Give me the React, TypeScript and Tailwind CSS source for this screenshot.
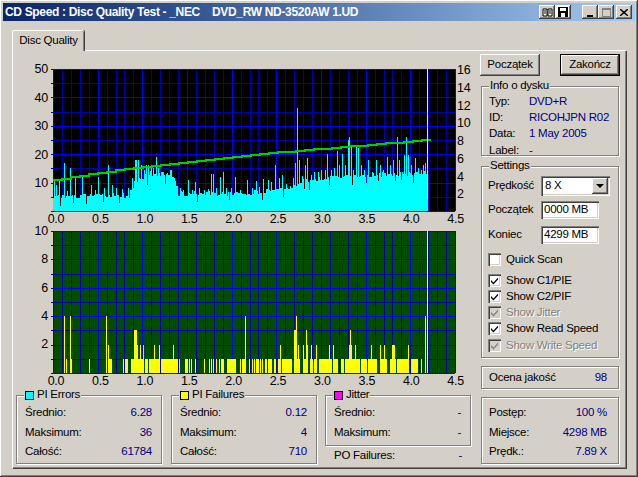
import { ReactNode } from 'react'

const raised = 'shadow-[inset_-1px_-1px_0_#404040,inset_1px_1px_0_#fff,inset_-2px_-2px_0_#808080]'
const sunken = 'shadow-[inset_1px_1px_0_#808080,inset_2px_2px_0_#404040,inset_-1px_-1px_0_#fff,inset_-2px_-2px_0_#d4d0c8]'
const etched = 'border border-[#808080] shadow-[inset_1px_1px_0_#fff,1px_1px_0_#fff]'

const X0 = 53
const X1 = 455
const PX_PER_UNIT = (X1 - X0) / 4.5
const FONT = 'Liberation Sans'

// page x -> top y of the cyan columns
const floorPts: [number, number][] = [[53, 199], [128, 198], [134, 184], [150, 176], [172, 178], [178, 196], [250, 196], [290, 190], [300, 184], [345, 178], [428, 176]]
const greenPts: [number, number][] = [[53, 180], [130, 168], [260, 154], [425, 140]]

const peaks: [number, number][] = [
  [54, 180], [56, 185], [59, 180], [64, 163], [67, 191], [70, 168], [75, 177], [82, 177], [91, 185], [95, 190], [98, 177], [104, 188], [108, 165], [112, 185],
  [116, 188], [122, 189], [128, 188], [132, 178], [135, 160], [136, 160], [138, 160], [141, 165], [144, 170], [146, 165], [148, 165], [151, 165], [153, 168], [156, 157], [158, 168], [161, 172],
  [164, 175], [167, 173], [170, 170], [171, 170], [174, 178], [176, 186], [180, 188], [183, 190], [188, 180], [192, 190], [195, 182], [199, 188], [204, 190], [208, 189], [211, 174], [213, 174],
  [216, 188], [220, 177], [223, 172], [226, 188], [231, 188], [235, 177], [240, 190], [247, 180], [252, 188], [256, 181], [259, 187], [263, 179], [268, 180], [271, 182], [275, 165], [279, 178], [282, 175],
  [286, 184], [290, 186], [293, 178], [295, 163], [297, 108], [299, 160], [302, 176], [305, 165], [307, 158], [311, 175], [314, 172], [318, 172], [321, 170], [325, 170], [327, 154], [331, 170], [334, 168],
  [337, 151], [339, 165], [342, 154], [345, 165], [348, 140], [349, 137], [351, 145], [353, 170], [356, 147], [358, 148], [361, 165], [364, 170], [368, 160], [372, 172], [376, 160], [380, 165], [383, 170], [387, 157],
  [390, 165], [393, 160], [397, 137], [399, 160], [402, 172], [404, 155], [406, 137], [408, 155], [411, 165], [415, 158], [418, 168], [421, 170], [423, 165], [425, 163],
]

const cuts = [60, 73, 86, 103, 119, 147, 165, 197, 229, 262, 283, 304, 309, 329, 352, 366, 378, 395, 401, 413]

const lerp = (pts: [number, number][], x: number) => {
  for (let i = 1; i < pts.length; i++) {
    if (x <= pts[i][0]) {
      const [a, b] = [pts[i - 1], pts[i]]
      return a[1] + ((b[1] - a[1]) * (x - a[0])) / (b[0] - a[0])
    }
  }
  return pts[pts.length - 1][1]
}

const cyanColumns = () => {
  const cols: { x: number; top: number }[] = []
  for (let x = X0; x < 428; x++) {
    const even = x - (x % 2)
    let top = lerp(floorPts, even) - (Math.abs(Math.sin(even * 12.9898) * 43758.5453) % 1) * 5
    const peak = peaks.find((p) => Math.abs(p[0] - x) < 1)
    if (peak) top = Math.min(top, peak[1])
    if (cuts.includes(x)) top = top + 8
    cols.push({ x, top: Math.round(top) })
  }
  return cols
}

const greenLine = () => {
  const out: string[] = []
  for (let x = X0; x < 425; x += 9) {
    const y = Math.round(lerp(greenPts, x))
    out.push(x + ',' + y, x + 9 + ',' + y)
  }
  return out.join(' ')
}

// [from x, to x] in page px
const yellowOne: [number, number][] = [
  [66, 67], [71, 72], [89, 90], [109, 112], [123, 124], [125, 128], [131, 144], [145, 148], [149, 150], [150, 160], [161, 172], [172, 178], [179, 180], [185, 188], [189, 190], [191, 192], [195, 196],
  [204, 205], [209, 210], [211, 212], [213, 214], [216, 217], [219, 220], [221, 224], [227, 230], [230, 233], [233, 236], [240, 241], [242, 245], [249, 250], [252, 253], [254, 255], [256, 259], [260, 261], [262, 263],
  [265, 267], [268, 272], [274, 276], [278, 280], [282, 292], [294, 300], [303, 308], [310, 313], [314, 317], [319, 327], [327, 332], [333, 338], [341, 344], [345, 360], [361, 367], [368, 377], [380, 387], [390, 396], [397, 409], [411, 418], [421, 422], [425, 426],
]
const yellowTall: [number, number, number][] = [
  [64, 65, 4], [70, 71, 4], [106, 107, 4], [245, 246, 4], [108, 109, 2], [137, 138, 2], [140, 141, 2], [143, 144, 2], [154, 155, 2], [159, 160, 2], [173, 174, 2], [134, 137, 3],
  [280, 281, 2], [294, 297, 3], [296, 297, 4], [298, 299, 2], [303, 304, 2], [306, 307, 3], [307, 308, 2], [311, 312, 2], [316, 317, 2], [329, 330, 2], [333, 334, 2], [349, 352, 2], [350, 351, 3], [355, 356, 2], [371, 372, 2], [380, 381, 2], [384, 385, 2], [392, 395, 2], [408, 409, 2], [425, 426, 4],
]

function Chart({ top, svgTop, svgH, bg, labels, cyan }: { top: number; svgTop: number; svgH: number; bg: string; labels: [string, number][]; cyan?: boolean }) {
  const plotH = 142
  const bottom = top + plotH
  const hLines = Array.from({ length: 11 }, (_, i) => i)
  const vLines = Array.from({ length: 46 }, (_, i) => i)
  return (
    <svg width="462" height={svgH} viewBox={'13 ' + svgTop + ' 462 ' + svgH} className="block overflow-visible" style={{ fontFamily: FONT }}>
      <rect x={X0} y={top} width={X1 - X0} height={plotH} fill={bg} />
      <g shapeRendering="crispEdges">
        {vLines.map((i) => {
          const x = Math.round(X0 + i * (PX_PER_UNIT / 10))
          return <line key={i} x1={x + 0.5} x2={x + 0.5} y1={top} y2={bottom} stroke={i % 5 === 0 ? '#0000ff' : '#0000b0'} />
        })}
        {hLines.map((i) => {
          const y = Math.round(top + i * 14.2)
          return <line key={i} x1={X0 - 2} x2={X1} y1={y + 0.5} y2={y + 0.5} stroke={i % 2 === 0 ? '#0000ff' : '#0000b0'} />
        })}
        {cyan && cyanColumns().map((c) => <rect key={c.x} x={c.x} y={c.top} width="1" height={bottom - c.top} fill="#00ffff" />)}
        {!cyan && yellowOne.map(([a, b]) => <rect key={a + '-' + b} x={a} y={bottom - 14} width={b - a} height="14" fill="#ffff00" />)}
        {!cyan && yellowTall.map(([a, b, v]) => <rect key={a + '-' + v} x={a} y={Math.round(bottom - v * 14.2)} width={b - a} height={Math.round(v * 14.2)} fill="#ffff00" />)}
      </g>
      {cyan && <polyline points={greenLine()} fill="none" stroke="#00d000" strokeWidth="1.5" shapeRendering="crispEdges" />}
      <rect x="427" y={top} width="1" height={cyan ? 130 : plotH} fill="#e4e4dc" />
      {labels.map(([t, y]) => (
        <text key={t} x="48" y={y + 4} textAnchor="end" fontSize="12.5" fill="#000">{t}</text>
      ))}
      {cyan && [16, 14, 12, 10, 8, 6, 4, 2].map((v) => (
        <text key={v} x="457" y={bottom - v * 8.875 + 5} fontSize="12.5" fill="#000">{v}</text>
      ))}
      {['0.0', '0.5', '1.0', '1.5', '2.0', '2.5', '3.0', '3.5', '4.0', '4.5'].map((t, i) => (
        <text key={t} x={56 + i * 44.4} y={bottom + 12} textAnchor="middle" fontSize="12.5" fill="#000">{t}</text>
      ))}
    </svg>
  )
}

function Group({ title, swatch, className, children }: { title: string; swatch?: string; className: string; children: ReactNode }) {
  return (
    <div className={'relative ' + etched + ' ' + className}>
      <div className="absolute -top-[8px] left-[7px] flex h-[14px] items-center gap-[3px] bg-[#d4d0c8] px-[1px]">
        {swatch && <span className={'h-[9px] w-[9px] border border-black ' + swatch} />}
        <span>{title}</span>
      </div>
      {children}
    </div>
  )
}

function Row({ label, value, className }: { label: string; value: string; className: string }) {
  return (
    <div className={'flex items-center justify-between ' + className}>
      <span>{label}</span>
      <span className="text-[#000080]">{value}</span>
    </div>
  )
}

function Info({ label, value }: { label: string; value: string }) {
  return (
    <div className="flex h-[16.4px] items-center">
      <span className="w-[40px]">{label}</span>
      <span className="text-[#000080]">{value}</span>
    </div>
  )
}

function Check({ label, checked, disabled, className }: { label: string; checked?: boolean; disabled?: boolean; className?: string }) {
  return (
    <div className={'flex items-center gap-[5px] ' + (className ?? 'h-[16.25px]')}>
      <span className={'flex h-[13px] w-[13px] items-center justify-center ' + sunken + ' ' + (disabled ? 'bg-[#d4d0c8]' : 'bg-white')}>
        {checked && (
          <svg width="9" height="9" viewBox="0 0 9 9">
            <path d="M1 4l2.5 2.5L8 1.5v2L3.5 8.5 1 6z" fill={disabled ? '#808080' : '#000'} />
          </svg>
        )}
      </span>
      <span className={disabled ? 'text-[#808080] [text-shadow:1px_1px_0_#fff]' : ''}>{label}</span>
    </div>
  )
}

function TitleBtn({ children, className }: { children: ReactNode; className?: string }) {
  return <div className={'flex h-[14px] w-[16px] items-center justify-center bg-[#d4d0c8] ' + raised + ' ' + (className ?? '')}>{children}</div>
}

export default function App() {
  return (
    <div className={"h-[477px] w-[638px] overflow-hidden bg-[#d4d0c8] px-[3px] pt-[3px] text-[11.5px] tracking-[-0.25px] text-black font-['Liberation_Sans',sans-serif] " + raised}>
      <div className="flex h-[18px] items-center justify-between bg-gradient-to-r from-[#0a246a] to-[#a6caf0] pl-[2px] pr-[3px]">
        <span className="whitespace-pre text-[12px] font-bold tracking-[-0.33px] text-white">{'CD Speed : Disc Quality Test - _NEC    DVD_RW ND-3520AW 1.UD'}</span>
        <div className="flex items-center">
          <TitleBtn>
            <svg width="11" height="9" viewBox="0 0 11 9"><path d="M1 1h4v7H1zM6 1h4v7H6z" fill="#fff" stroke="#000" /><path d="M2 3h2M2 5h2M7 3h2M7 5h2" stroke="#000" /></svg>
          </TitleBtn>
          <TitleBtn className="bg-white">
            <svg width="10" height="10" viewBox="0 0 10 10"><path d="M0 0h10v10H0z" fill="#000" /><path d="M2 1h6v3H2zM3 6h4v4H3z" fill="#fff" /></svg>
          </TitleBtn>
          <TitleBtn className="ml-[11px]">
            <span className="mt-[7px] h-[2px] w-[6px] bg-black" />
          </TitleBtn>
          <TitleBtn>
            <span className="h-[9px] w-[9px] border border-t-2 border-[#808080]" />
          </TitleBtn>
          <TitleBtn className="ml-[2px]">
            <svg width="8" height="7" viewBox="0 0 8 7"><path d="M0 0l8 7M8 0L0 7" stroke="#000" strokeWidth="1.5" /></svg>
          </TitleBtn>
        </div>
      </div>

      <div className="ml-[9px] mt-[9px]">
        <div className="relative z-10 -mb-px flex h-[21px] w-[72px] items-center justify-center rounded-t-[2px] border-l border-t border-white bg-[#d4d0c8] shadow-[inset_-1px_0_0_#808080,1px_0_0_#404040]">
          Disc Quality
        </div>
        <div className="flex h-[418px] w-[614px] border-l border-t border-white shadow-[1px_1px_0_#404040,inset_-1px_-1px_0_#808080]">
          <div className="w-[462px]">
            <Chart
              top={69}
              svgTop={51}
              svgH={176}
              bg="#000000"
              cyan
              labels={[['50', 69], ['40', 98], ['30', 126], ['20', 155], ['10', 183]]}
            />
            <Chart
              top={231}
              svgTop={227}
              svgH={163}
              bg="#004d00"
              labels={[['10', 231], ['8', 259], ['6', 288], ['4', 316], ['2', 344]]}
            />
            <div className="ml-[3px] mt-[5px] flex">
              <Group title="PI Errors" swatch="bg-[#00ffff]" className="h-[69px] w-[146px] pl-[8px] pr-[9px] pt-[7px]">
                <Row label="Średnio:" value="6.28" className="h-[19.5px]" />
                <Row label="Maksimum:" value="36" className="h-[19.5px]" />
                <Row label="Całość:" value="61784" className="h-[19.5px]" />
              </Group>
              <Group title="PI Failures" swatch="bg-[#ffff00]" className="ml-[9px] h-[69px] w-[146px] pl-[8px] pr-[9px] pt-[7px]">
                <Row label="Średnio:" value="0.12" className="h-[19.5px]" />
                <Row label="Maksimum:" value="4" className="h-[19.5px]" />
                <Row label="Całość:" value="710" className="h-[19.5px]" />
              </Group>
              <div className="ml-[8px] w-[146px]">
                <Group title="Jitter" swatch="bg-[#ff00ff]" className="h-[51px] pl-[8px] pr-[9px] pt-[7px]">
                  <Row label="Średnio:" value="-" className="h-[19.5px]" />
                  <Row label="Maksimum:" value="-" className="h-[19.5px]" />
                </Group>
                <Row label="PO Failures:" value="-" className="ml-[9px] mr-[9px] mt-[2px] h-[16px]" />
              </div>
            </div>
          </div>

          <div className="ml-[5px] w-[140px] pt-[3px]">
            <div className="flex justify-between">
              <button className={'h-[22px] w-[60px] bg-[#d4d0c8] ' + raised}>Początek</button>
              <button className={'h-[22px] w-[60px] border border-black bg-[#d4d0c8] ' + raised}>Zakończ</button>
            </div>
            <Group title="Info o dysku" className="ml-[1px] mt-[10px] h-[70px] w-[138px] pl-[7px] pt-[6px]">
              <Info label="Typ:" value="DVD+R" />
              <Info label="ID:" value="RICOHJPN R02" />
              <Info label="Data:" value="1 May 2005" />
              <Info label="Label:" value="-" />
            </Group>
            <Group title="Settings" className="ml-[1px] mt-[10px] h-[192px] w-[138px] pl-[6px] pt-[9px]">
              <div className="flex h-[20px] items-center">
                <span className="w-[53px]">Prędkość</span>
                <div className={'flex h-[20px] w-[69px] items-center justify-between bg-white pl-[4px] pr-[2px] ' + sunken}>
                  <span>8 X</span>
                  <div className={'flex h-[16px] w-[16px] items-center justify-center bg-[#d4d0c8] ' + raised}>
                    <span className="h-0 w-0 border-x-[4px] border-t-[4px] border-x-transparent border-t-black" />
                  </div>
                </div>
              </div>
              <div className="mt-[5px] flex h-[18px] items-center">
                <span className="w-[53px]">Początek</span>
                <div className={'flex h-[18px] w-[58px] items-center bg-white pl-[3px] ' + sunken}>0000 MB</div>
              </div>
              <div className="mt-[7px] flex h-[18px] items-center">
                <span className="w-[53px]">Koniec</span>
                <div className={'flex h-[18px] w-[58px] items-center bg-white pl-[3px] ' + sunken}>4299 MB</div>
              </div>
              <Check label="Quick Scan" className="mt-[9px] h-[13px]" />
              <div className="mt-[6px]">
                <Check label="Show C1/PIE" checked />
                <Check label="Show C2/PIF" checked />
                <Check label="Show Jitter" checked disabled />
                <Check label="Show Read Speed" checked />
                <Check label="Show Write Speed" checked disabled />
              </div>
            </Group>
            <div className={'ml-[1px] mt-[8px] flex h-[23px] w-[138px] items-center justify-between pl-[7px] pr-[11px] ' + etched}>
              <span>Ocena jakość</span>
              <span className="text-[#000080]">98</span>
            </div>
            <div className={'ml-[1px] mt-[8px] h-[67px] w-[138px] pl-[7px] pr-[11px] pt-[5px] ' + etched}>
              <Row label="Postęp:" value="100 %" className="h-[19.5px]" />
              <Row label="Miejsce:" value="4298 MB" className="h-[19.5px]" />
              <Row label="Prędk.:" value="7.89 X" className="h-[19.5px]" />
            </div>
          </div>
        </div>
      </div>
    </div>
  )
}
